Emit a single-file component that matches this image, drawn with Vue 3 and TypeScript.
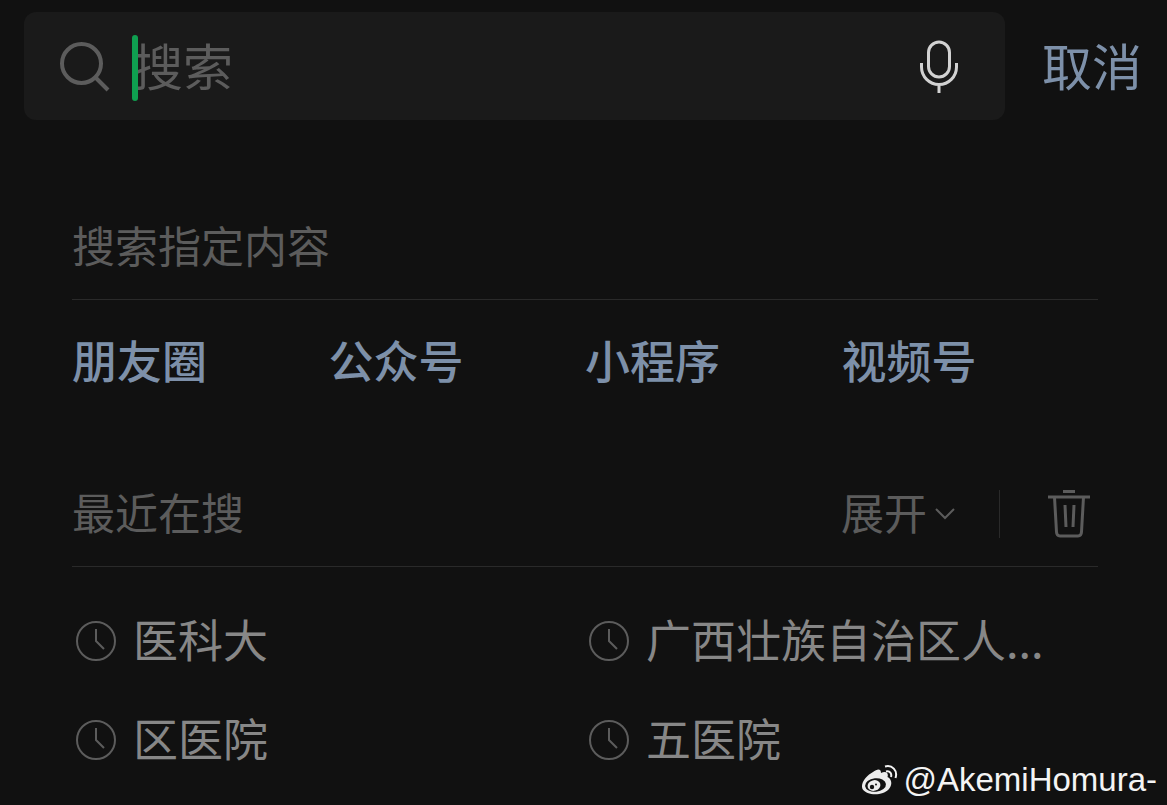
<script setup lang="ts">
import { ref } from 'vue'

const query = ref('')
const categories: string[] = ['朋友圈', '公众号', '小程序', '视频号']
const recent: string[] = ['医科大', '广西壮族自治区人...', '区医院', '五医院']
</script>

<template>
  <main class="page">
    <form class="top" role="search" @submit.prevent>
      <div class="box">
        <svg class="magnifier" viewBox="0 0 52 52" aria-hidden="true">
          <circle cx="22.500" cy="22.500" r="19.500" />
          <path d="M36 36 49 49" />
        </svg>
        <div class="field">
          <input v-model="query" type="text" placeholder="搜索" aria-label="搜索" />
          <span v-if="!query" class="caret"></span>
        </div>
        <button type="button" class="mic" aria-label="语音输入">
          <svg viewBox="0 0 40 54" aria-hidden="true">
            <rect x="9.5" y="2" width="21" height="35" rx="10.5" />
            <path d="M2.500 23v4a17.500 17.500 0 0 0 35 0v-4M20 45v8" />
          </svg>
        </button>
      </div>
      <button type="button" class="cancel">取消</button>
    </form>

    <section class="section">
      <header class="head"><h2>搜索指定内容</h2></header>
      <nav class="categories">
        <a v-for="name in categories" :key="name" href="#">{{ name }}</a>
      </nav>
    </section>

    <section class="section recent">
      <header class="head">
        <h2>最近在搜</h2>
        <button type="button" class="expand">
          <span>展开</span>
          <svg viewBox="0 0 20 12" aria-hidden="true"><path d="M1 1 10 10 19 1" /></svg>
        </button>
        <button type="button" class="trash" aria-label="清空">
          <svg viewBox="0 0 42 50" aria-hidden="true">
            <path d="M15 2.500H27M0 8H42" />
            <path d="M6.500 8 8.500 43Q8.700 47 12 47H30Q33.300 47 33.500 43L35.500 8M17 16 18 38M26 16 25 38" />
          </svg>
        </button>
      </header>
      <ul class="items">
        <li v-for="item in recent" :key="item">
          <a href="#">
            <svg class="clock" viewBox="0 0 40 40" aria-hidden="true">
              <circle cx="20" cy="20" r="19" />
              <path d="M20 8V20L28 28" />
            </svg>
            <span>{{ item }}</span>
          </a>
        </li>
      </ul>
    </section>

    <div class="mark">
      <svg viewBox="0 0 38 32" aria-hidden="true">
        <path class="light" d="M12 8C16 5 20 4 20 9C24 7 28 8 26.500 13C31 15 31.500 21 28 25C22 32 6 32 1.500 25C-1 19 6 11 12 8Z" />
        <ellipse class="dark" cx="14.500" cy="21" rx="10.500" ry="6.800" transform="rotate(-6 14.500 21)" />
        <ellipse class="light" cx="13" cy="21.500" rx="6.500" ry="5.300" transform="rotate(-15 13 21.500)" />
        <circle class="dark" cx="11" cy="23" r="2.200" />
        <circle class="dark" cx="15" cy="20.500" r="1" />
        <path class="wave" d="M24 2.500C31 .5 37 6.500 34.500 14M25 7.500C29 6.500 31 9.500 30 13" />
      </svg>
      <span>@AkemiHomura-</span>
    </div>
  </main>
</template>

<style>
body {
  margin: 0;
  background: #111111;
}
</style>

<style scoped>
.page {
  position: relative;
  box-sizing: border-box;
  min-height: 100vh;
  padding-top: 12px;
  overflow: hidden;
  background: #111111;
  color: #878787;
  font-family: "Noto Sans CJK SC", sans-serif;
  font-weight: 400;
}

svg {
  display: block;
  flex: none;
  fill: none;
  stroke: currentColor;
}

button,
input {
  margin: 0;
  padding: 0;
  border: 0;
  background: none;
  color: inherit;
  font: inherit;
}

button {
  cursor: pointer;
}

a {
  color: inherit;
  text-decoration: none;
}

.top {
  display: flex;
  align-items: center;
  gap: 37px;
  padding: 0 25px 0 24px;
}

.box {
  display: flex;
  flex: 1;
  align-items: center;
  min-width: 0;
  height: 108px;
  padding: 2px 46px 0 35px;
  box-sizing: border-box;
  border-radius: 12px;
  background: #1a1a1a;
}

.magnifier {
  width: 52px;
  color: #5c5c5c;
  stroke-width: 4;
}

.field {
  position: relative;
  flex: 1;
  min-width: 0;
  margin-left: 22px;
}

.field input {
  display: block;
  width: 100%;
  height: 78px;
  padding-bottom: 6px;
  box-sizing: border-box;
  outline: none;
  font-size: 50px;
  caret-color: #10a050;
}

.field input::placeholder {
  color: #5c5c5c;
  opacity: 1;
}

.caret {
  position: absolute;
  top: 7px;
  left: -1px;
  width: 6px;
  height: 66px;
  border-radius: 3px;
  background: #0f9f50;
}

.mic {
  color: #d2d2d2;
}

.mic svg {
  width: 40px;
  stroke-width: 3;
}

.cancel {
  padding-bottom: 4px;
  color: #7d90a9;
  font-size: 50px;
  line-height: 72px;
}

.section {
  margin: 91px 69px 0 72px;
}

.head {
  display: flex;
  align-items: center;
  height: 89px;
  padding-bottom: 16px;
  box-sizing: border-box;
  border-bottom: 1px solid #2a2a2a;
  color: #5c5c5c;
  font-size: 43px;
}

.head h2 {
  flex: 1;
  margin: 0;
  padding-bottom: 6px;
  font-size: inherit;
  font-weight: inherit;
  line-height: 64px;
}

.categories {
  display: grid;
  grid-template-columns: repeat(4, 1fr);
  padding-top: 26px;
  color: #7d90a9;
  font-size: 45px;
  font-weight: 500;
  line-height: 68px;
}

.recent {
  margin-top: 84px;
}

.expand {
  display: flex;
  align-items: center;
  gap: 8px;
  padding-right: 44px;
  line-height: 64px;
}

.expand span {
  padding-bottom: 6px;
}

.expand svg {
  width: 20px;
  stroke-width: 2;
}

.trash {
  display: flex;
  align-items: center;
  height: 48px;
  padding: 0 8px 0 48px;
  border-left: 1px solid #2a2a2a;
}

.trash svg {
  width: 42px;
  stroke-width: 3;
}

.items {
  display: grid;
  grid-template-columns: repeat(2, minmax(0, 1fr));
  row-gap: 27px;
  margin: 0;
  padding: 38px 0 0;
  list-style: none;
  font-size: 45px;
}

.items a {
  display: flex;
  align-items: center;
  gap: 17px;
  padding: 0 32px 0 4px;
}

.items span {
  padding-bottom: 4px;
  overflow: hidden;
  line-height: 68px;
  text-overflow: ellipsis;
  white-space: nowrap;
}

.clock {
  width: 40px;
  color: #5c5c5c;
  stroke-width: 2;
}

.mark {
  position: absolute;
  right: 10px;
  bottom: 6px;
  display: flex;
  align-items: center;
  gap: 4px;
  color: #f4f4f4;
  font-family: "Liberation Sans", sans-serif;
  font-size: 33px;
  line-height: 38px;
}

.mark svg {
  width: 38px;
}

.mark .light {
  fill: #ececec;
  stroke: none;
}

.mark .dark {
  fill: #111111;
  stroke: none;
}

.mark .wave {
  stroke-width: 2;
}
</style>
